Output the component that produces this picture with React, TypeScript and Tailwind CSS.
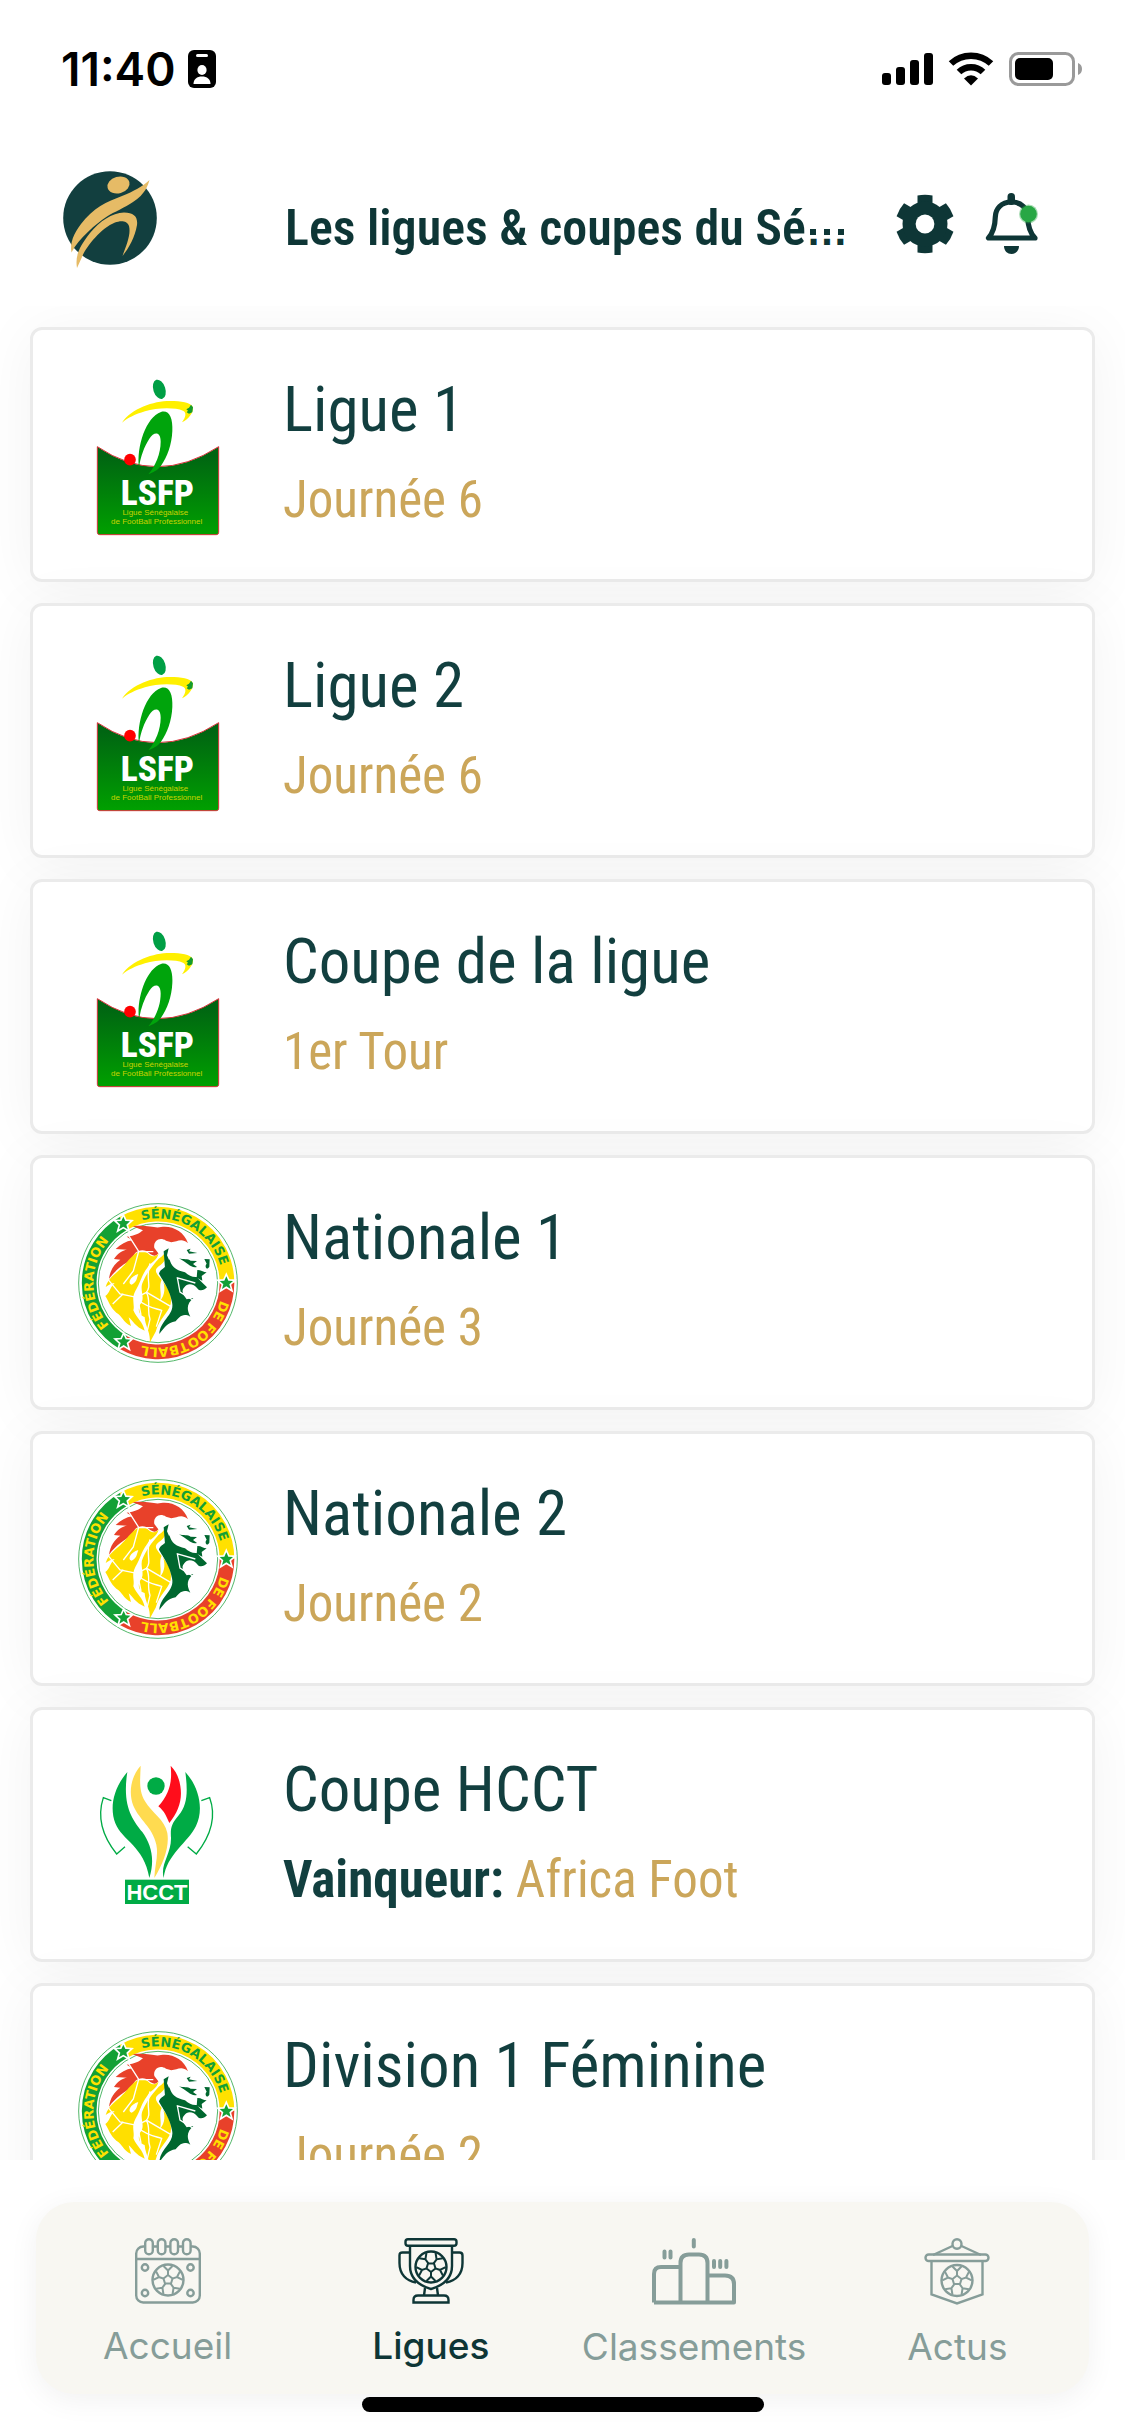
import React from "react";

type LogoType = "lsfp" | "fsf" | "hcct";

type LeagueType = {
  name: string;
  logo: LogoType;
  detail: string;
  label?: string;
};

const leagues: LeagueType[] = [
  { name: "Ligue 1", logo: "lsfp", detail: "Journée 6" },
  { name: "Ligue 2", logo: "lsfp", detail: "Journée 6" },
  { name: "Coupe de la ligue", logo: "lsfp", detail: "1er Tour" },
  { name: "Nationale 1", logo: "fsf", detail: "Journée 3" },
  { name: "Nationale 2", logo: "fsf", detail: "Journée 2" },
  { name: "Coupe HCCT", logo: "hcct", label: "Vainqueur:", detail: "Africa Foot" },
  { name: "Division 1 Féminine", logo: "fsf", detail: "Journée 2" },
];

const StatusBar = () => (
  <div className="flex h-[132px] shrink-0 items-center justify-between pt-1.5 pr-[42px] pl-[61px]">
    <div className="flex items-center gap-3">
      <span className="font-['Inter',sans-serif] text-[46px] leading-none font-semibold text-black">
        11:40
      </span>
      <svg className="h-[38px] w-7" viewBox="0 0 28 38">
        <rect width="28" height="38" rx="6" />
        <rect x="8" y="4" width="12" height="3" rx="1.5" fill="#fff" />
        <ellipse cx="14" cy="20" rx="4.6" ry="5" fill="#fff" />
        <path d="M5.5 34C5.5 29 9 26.5 14 26.5S22.5 29 22.5 34Z" fill="#fff" />
      </svg>
    </div>
    <div className="flex items-center gap-[15px]">
      <svg className="h-[34px] w-[51px]" viewBox="0 0 51 34">
        <rect y="21" width="9" height="12" rx="3" />
        <rect x="14" y="15" width="9" height="18" rx="3" />
        <rect x="28" y="8" width="9" height="25" rx="3" />
        <rect x="42" y="1" width="9" height="32" rx="3" />
      </svg>
      <svg className="h-[34px] w-[46px]" viewBox="0 0 46 34" fill="none" stroke="#000">
        <path d="M3 11.5C14 1 32 1 43 11.5" strokeWidth="6.5" />
        <path d="M11 20C17.5 13.5 28.5 13.5 35 20" strokeWidth="6.5" />
        <path d="M16 26.5Q23 20 30 26.5L23 33.5Z" fill="#000" stroke="none" />
      </svg>
      <svg className="h-[34px] w-[74px]" viewBox="0 0 74 34">
        <rect x="1.5" y="1.5" width="63" height="31" rx="8" fill="none" stroke="#9a9a9a" strokeWidth="3" />
        <rect x="6" y="6" width="38" height="22" rx="5" />
        <path d="M69 11Q73 12.5 73 17T69 23Z" fill="#9a9a9a" />
      </svg>
    </div>
  </div>
);

const AppLogo = () => (
  <svg className="h-[98px] w-[94px] shrink-0" viewBox="0 0 94 98">
    <circle cx="47" cy="47" r="46.8" fill="#123f3f" />
    <g fill="#e6bb66">
      <ellipse cx="55.5" cy="14" rx="11.3" ry="8.3" transform="rotate(-16 55.5 14)" />
      <path d="M86.5 9C85 14 82.5 23 70 31C62 36.5 51 41 44 45.5C33 53 16 67 8.5 81.5C6.5 72 11 62 18 53C30 37 44 30.5 59 25C71 20 79 16 86.5 9Z" />
      <path d="M14 97C12 85 16 76 27 62C37 50 49 42 61 41.5C71 41.5 75 46 74 54C72 66 66 77 59.5 85C64 73 68 63 66 55C64 49 57 49.5 52 51.5C38 57 23 76 19 86Z" />
    </g>
  </svg>
);

const GearIcon = () => (
  <svg className="h-[60px] w-[60px]" viewBox="-30 -30 60 60">
    <g fill="#0e3636">
      {[0, 60, 120, 180, 240, 300].map((angle) => (
        <path
          key={angle}
          d="M-7.5 -28.5Q0 -30 7.5 -28.5V-18H-7.5Z"
          transform={`rotate(${angle})`}
        />
      ))}
      <circle r="22.5" />
    </g>
    <circle r="9.4" fill="#fff" />
  </svg>
);

const BellIcon = () => (
  <svg className="h-[62px] w-[54px]" viewBox="0 0 54 62">
    <rect x="22.5" width="7.5" height="12" rx="3.7" fill="#0e3636" />
    <path
      d="M26.5 9C16 9 10.5 16 10.3 24C10 36 7 41 3.5 45H50C46 41 43 36 42.7 24C42.5 16 37 9 26.5 9Z"
      fill="none"
      stroke="#0e3636"
      strokeWidth="5.2"
      strokeLinejoin="round"
    />
    <path d="M19 53H34C34 58 30.5 61 26.5 61S19 58 19 53Z" fill="#0e3636" />
    <circle cx="43.5" cy="21" r="9.5" fill="#28a745" opacity="0.4" />
    <circle cx="43.5" cy="21" r="8.3" fill="#28a745" />
  </svg>
);

const Header = () => (
  <header className="flex h-[174px] shrink-0 items-center pt-0.5 pr-[86px] pl-[63px]">
    <AppLogo />
    <h1 className="ml-[128px] min-w-0 flex-1 pt-4 font-['Roboto_Condensed','Roboto',sans-serif] text-[50px] leading-[60px] font-semibold whitespace-nowrap text-[#0e3636]">
      Les ligues &amp; coupes du Sé
      <span className="relative font-['Liberation_Sans',sans-serif] text-[42px] leading-none font-bold">
        …
        <span className="absolute bottom-[19px] left-0 flex w-full justify-around">
          <i className="size-1.5 bg-[#0e3636]" />
          <i className="size-1.5 bg-[#0e3636]" />
          <i className="size-1.5 bg-[#0e3636]" />
        </span>
      </span>
    </h1>
    <div className="flex items-center gap-[30px] pt-2">
      <button type="button" aria-label="Paramètres">
        <GearIcon />
      </button>
      <button type="button" aria-label="Notifications">
        <BellIcon />
      </button>
    </div>
  </header>
);

const LsfpLogo = () => (
  <svg className="h-[175px] w-[145px]" viewBox="3 -9 435 525">
    <defs>
      <linearGradient id="lsfp" x1="0" y1="0" x2="0" y2="1">
        <stop offset="0.1" stopColor="#006512" />
        <stop offset="1" stopColor="#00a000" />
      </linearGradient>
    </defs>
    <path
      d="M37 230Q215 350 401 230V487Q401 494 394 494H44Q37 494 37 487Z"
      fill="url(#lsfp)"
      stroke="#d8323a"
      strokeWidth="3"
    />
    <ellipse cx="223" cy="58" rx="18" ry="30" fill="#009f45" transform="rotate(-18 223 58)" />
    <path
      d="M111 158C140 115 205 93 255 93C290 93 315 98 323 110C328 125 312 146 291 157C303 140 305 128 294 122C270 112 215 113 180 124C150 133 130 143 111 158Z"
      fill="#fff000"
    />
    <path d="M304 118L312 113L318 104L324 112L322 127L312 131L305 127L309 122Z" fill="#149b2e" />
    <path
      d="M162 293C154 230 183 141 228 126C252 119 264 143 262 183C260 225 247 261 228 287C216 303 205 305 190 313C212 287 227 250 227 215C227 184 207 184 193 206C177 231 167 259 162 293Z"
      fill="#00a40c"
    />
    <circle cx="135" cy="269" r="17.5" fill="#f00" />
    <text
      x="217"
      y="406"
      textAnchor="middle"
      className="font-['Roboto_Condensed','Roboto',sans-serif] text-[106px] font-extrabold"
      fill="#fff"
    >
      LSFP
    </text>
    <g fill="#c8d400" textAnchor="middle" className="font-['Liberation_Sans',sans-serif] text-[24px]">
      <text x="211" y="435">Ligue Sénégalaise</text>
      <text x="215" y="463">de FootBall Professionnel</text>
    </g>
  </svg>
);

const STAR = "M0 -20L6 -7L20 -6L9 4L13 18L0 10L-13 18L-9 4L-20 -6L-6 -7Z";

const FsfLogo = () => (
  <svg className="h-40 w-40" viewBox="-240 -240 480 480">
    <defs>
      <path id="fsf-left" d="M-97 168A194 194 0 0 1 -97 -168" />
      <path id="fsf-top" d="M-97 -168A194 194 0 0 1 194 0" />
      <path id="fsf-right" d="M194 0A194 194 0 0 1 -97 168" />
    </defs>
    <circle r="238" fill="#fff" stroke="#2fa84a" strokeWidth="2.5" />
    <g fill="none" strokeWidth="44">
      <path d="M-103.5 179A207 207 0 0 1 -103.5 -179" stroke="#13a035" />
      <path d="M-103.5 -179A207 207 0 0 1 207 0" stroke="#ffe100" />
      <path d="M207 0A207 207 0 0 1 -103.5 179" stroke="#e8412a" />
    </g>
    <circle r="179" fill="none" stroke="#2fa84a" strokeWidth="2.5" />
    <g textAnchor="middle" className="font-['DejaVu_Sans',sans-serif] text-[39px] font-bold">
      <text fill="#ffe100">
        <textPath href="#fsf-left" startOffset="50%">FÉDÉRATION</textPath>
      </text>
      <text fill="#13a035">
        <textPath href="#fsf-top" startOffset="50%">SÉNÉGALAISE</textPath>
      </text>
      <text fill="#ffe100">
        <textPath href="#fsf-right" startOffset="50%">DE FOOTBALL</textPath>
      </text>
    </g>
    <g fill="#13a035" stroke="#fff" strokeWidth="10" paintOrder="stroke">
      <path d={STAR} transform="translate(-104 -179)" />
      <path d={STAR} transform="translate(205 0)" />
      <path d={STAR} transform="translate(-103 176)" />
    </g>
    {/* lion */}
    <g transform="translate(-264 -279)">
      <path
        d="M117 266C121 239 133 221 151 209L132 207C143 190 157 181 171 179L137 177C152 163 168 154 187 151L170 140C195 138 208 130 219 121L188 109C230 103 253 116 273 111C306 106 342 123 354 160C340 147 329 151 319 154L304 157L288 152C267 139 249 155 253 174L265 190C256 204 243 195 229 183C207 176 190 188 186 210C168 216 137 239 117 266Z"
        fill="#e8412a"
      />
      <g fill="#ffdf00">
        <path d="M184 202C202 180 225 181 238 194C252 203 260 198 266 190C262 213 240 218 231 235C214 257 212 277 196 303C183 327 195 343 190 361C201 387 218 394 224 422C197 411 187 391 176 382L183 408C159 396 156 377 139 368C120 351 116 334 106 318C120 309 119 293 134 279C123 280 114 286 107 291C116 261 141 249 157 231C168 222 174 211 184 202Z" />
        <path d="M266 206C279 199 284 190 288 181C291 199 287 216 266 229C247 244 265 254 277 273C294 293 307 317 302 342C295 369 268 386 257 425L239 458C243 429 225 407 224 381C208 376 202 359 210 344C229 324 206 300 219 275C229 252 243 232 266 206Z" />
      </g>
      <g fill="#00672f">
        <path d="M299 207C302 230 321 242 345 247C356 257 367 262 380 261L397 278L411 292C402 302 388 303 383 296C371 281 352 278 343 292C330 305 344 319 350 328L370 324C352 340 348 355 361 380C337 367 326 384 317 394C291 398 284 413 268 432C270 391 315 375 306 337C300 302 283 279 267 251C272 232 291 238 299 207Z" />
        <path d="M327 205C340 210 354 205 362 212L381 213L369 222L381 231C361 235 355 220 327 205Z" />
        <path d="M403 207L419 208L418 230C411 243 402 229 410 221Z" />
        <path d="M350 180L362 176L357 184L382 189L357 191Z" />
        <path d="M382 240C393 239 402 248 410 247L395 258L397 272L380 263Z" />
        <path d="M281 184L296 175L291 196L300 217L285 234Z" />
      </g>
      <g fill="none" stroke="#fff" strokeWidth="4">
        <path d="M112 266L150 312L200 322L230 307L303 350" />
        <path d="M160 311L128 342M202 320L213 375" />
        <path d="M176 137L206 184L250 185M206 184L190 243L160 282" />
        <path d="M276 174C268 160 257 172 267 180L287 170" />
        <path d="M322 263L330 306L368 330M320 263L376 279" />
        <path d="M240 220C225 268 247 286 229 307C244 331 229 356 240 388L230 430" />
        <path d="M204 330C235 354 253 354 275 361L259 410" />
      </g>
      <path d="M185 284C171 282 181 258 205 252C199 270 199 277 185 284Z" fill="#fff" />
      <path d="M276 268C264 288 277 310 270 332C286 317 287 287 276 268Z" fill="#fff" />
    </g>
  </svg>
);

const HcctLogo = () => (
  <svg className="h-[165px] w-[135px]" viewBox="3 4 405 495">
    <g fill="#00ab45">
      <path d="M112 64C70 112 58 172 76 218C96 270 162 286 178 382C195 328 185 284 157 244C127 206 96 166 112 64Z" />
      <path d="M286 64C330 112 341 180 318 226C294 276 230 310 221 382C210 340 244 310 243 262C241 232 244 220 265 195C294 161 293 120 286 64Z" />
      <circle cx="198" cy="106" r="26" />
      <rect x="105" y="387" width="192" height="73" />
    </g>
    <path
      d="M152 45C122 78 115 128 130 165C148 208 187 228 199 282C206 315 194 345 193 382C219 340 239 290 232 247C224 206 186 188 165 152C145 119 151 82 152 45Z"
      fill="#ffdb50"
    />
    <path
      d="M242 45C247 94 239 129 205 167C223 181 229 197 238 217C265 184 278 148 271 106C267 81 258 61 242 45Z"
      fill="#ff0d1b"
    />
    <g fill="none" stroke="#00ab45" strokeWidth="4">
      <path d="M64 150L40 141C24 190 31 249 80 310L105 288" />
      <path d="M334 150L359 141C377 190 367 249 319 310L293 288" />
    </g>
    <text
      x="201"
      y="448"
      textAnchor="middle"
      className="font-['Liberation_Sans',sans-serif] text-[66px] font-bold"
      fill="#fff"
    >
      HCCT
    </text>
  </svg>
);

const logos = { lsfp: LsfpLogo, fsf: FsfLogo, hcct: HcctLogo };

const LeagueCard = ({ league }: { league: LeagueType }) => {
  const Logo = logos[league.logo];

  return (
    <a
      href="#"
      className="flex h-[255px] items-center rounded-xl border-3 border-[#ebebeb] bg-white font-['Roboto_Condensed','Roboto',sans-serif] shadow-[0_6px_60px_rgba(0,0,0,0.05)]"
    >
      <div className="flex w-[250px] shrink-0 justify-center">
        <Logo />
      </div>
      <div className="leading-[90px] text-[#123f3f]">
        <h2 className="text-[63px]">{league.name}</h2>
        <p className="text-[51px]">
          {league.label && <strong>{league.label} </strong>}
          <span className="text-[#cba65a]">{league.detail}</span>
        </p>
      </div>
    </a>
  );
};

const Ball = ({ x, y, turned }: { x: number; y: number; turned?: boolean }) => (
  <g transform={`translate(${x} ${y}) rotate(${turned ? 180 : 0})`} strokeWidth="2">
    <circle r="15.5" strokeWidth="2.4" />
    <path d="M-3 -3.5H3L4.5 1.5L0 5L-4.5 1.5Z" />
    {[0, 72, 144, 216, 288].map((angle) => (
      <g key={angle} transform={`rotate(${angle})`}>
        <path d="M0 4.5V9.5L-4.5 14M0 9.5L4.5 14" />
      </g>
    ))}
  </g>
);

const CalendarIcon = () => (
  <svg className="h-[66px] w-[66px]" viewBox="0 0 66 66" fill="none" stroke="currentColor" strokeWidth="2.4">
    <rect x="1.2" y="8.5" width="63.6" height="56" rx="7" />
    <path d="M1 21H65" />
    {[14, 26.6, 39.2, 51.8].map((x) => (
      <rect key={x} x={x - 3.8} y="1.2" width="7.6" height="15" rx="3.8" fill="#f8f7f2" />
    ))}
    <circle cx="10" cy="29.5" r="3.2" />
    <circle cx="55.5" cy="29.5" r="3.2" />
    <circle cx="10" cy="55" r="3.2" />
    <circle cx="55.5" cy="55" r="3.2" />
    <Ball x={33} y={42} turned />
  </svg>
);

const TrophyIcon = () => (
  <svg className="h-[66px] w-[66px]" viewBox="0 0 66 66" fill="none" stroke="currentColor" strokeWidth="2.4">
    <rect x="7.5" y="1.2" width="51" height="6.6" rx="2.5" />
    <path d="M12 8V28C12 42 23 48 33 51C43 48 54 42 54 28V8" />
    <path d="M12 14.5H4.5Q1.5 14.5 1.5 17.5V25C1.5 36 8 43 18 44.5" />
    <path d="M54 14.5H61.5Q64.5 14.5 64.5 17.5V25C64.5 36 58 43 48 44.5" />
    <path d="M27 50L26 57.5M39 50L40 57.5" />
    <path d="M15.5 64.5V62Q15.5 57.5 20 57.5H46Q50.5 57.5 50.5 62V64.5Z" />
    <Ball x={33} y={29} />
  </svg>
);

const PodiumIcon = () => (
  <svg className="h-[67px] w-[84px]" viewBox="0 0 84 67" fill="none" stroke="currentColor" strokeWidth="4" strokeLinejoin="round">
    <path d="M2 64.5V36Q2 29 9 29H28M28.5 64.5V25Q28.5 16.5 37 16.5H47Q55.5 16.5 55.5 25V64.5M56 37.5H73Q82 37.5 82 46V64.5H2" />
    <path
      d="M41.8 2V8.5M12.5 13.5V19.5M18.5 13.5V19.5M62 23V29M68.2 23V29M74.4 23V29"
      strokeLinecap="round"
    />
  </svg>
);

const PennantIcon = () => (
  <svg className="h-[67px] w-[66px]" viewBox="0 0 66 67" fill="none" stroke="currentColor" strokeWidth="2.4">
    <ellipse cx="33" cy="6" rx="4.5" ry="4.8" />
    <path d="M28.5 8L9 17M37.5 8L57 17" />
    <rect x="1.5" y="16.5" width="63" height="6.5" rx="3.2" />
    <path d="M7.5 23V56.5L33 65.5L58.5 56.5V23" />
    <Ball x={33} y={42.5} turned />
  </svg>
);

const tabs = [
  { label: "Accueil", Icon: CalendarIcon },
  { label: "Ligues", Icon: TrophyIcon, active: true },
  { label: "Classements", Icon: PodiumIcon },
  { label: "Actus", Icon: PennantIcon },
];

const TabBar = () => (
  <footer className="relative shrink-0 bg-white px-9 pt-[42px] pb-6">
    <nav className="grid h-48 grid-cols-4 rounded-[38px] bg-[#f8f7f2] shadow-[0_6px_30px_rgba(0,0,0,0.06)]">
      {tabs.map(({ label, Icon, active }) => (
        <a
          key={label}
          href="#"
          aria-current={active ? "page" : undefined}
          className={`flex flex-col items-center gap-5 pt-9 font-['Inter',sans-serif] text-[37px] leading-11 ${
            active ? "font-medium text-[#0e3636]" : "text-[#869d99]"
          }`}
        >
          <Icon />
          {label}
        </a>
      ))}
    </nav>
    <div className="mx-auto mt-[3px] h-[15px] w-[402px] rounded-full bg-black" />
  </footer>
);

const App = () => {
  return (
    <div className="flex h-screen flex-col bg-white">
      <StatusBar />
      <Header />
      <main className="min-h-0 flex-1 overflow-y-auto px-[30px] pt-[21px] [scrollbar-width:none]">
        <ul className="flex flex-col gap-[21px]">
          {leagues.map((league) => (
            <li key={league.name}>
              <LeagueCard league={league} />
            </li>
          ))}
        </ul>
      </main>
      <TabBar />
    </div>
  );
};

export default App;
